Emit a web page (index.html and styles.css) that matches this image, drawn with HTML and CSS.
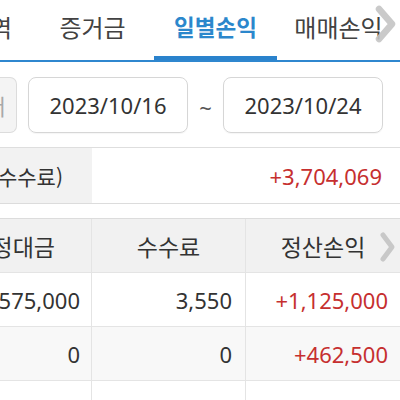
FILE: index.html
```html
<!DOCTYPE html>
<html lang="ko">
<head>
<meta charset="utf-8">
<link rel="stylesheet" href="styles.css">
</head>
<body>
<div class="page">
  <div class="tabs">
    <div class="tab tab-first"><span>거래내역</span></div>
    <div class="tab"><span>증거금</span></div>
    <div class="tab active"><span>일별손익</span></div>
    <div class="tab"><span>매매손익</span></div>
    <svg class="tab-arrow" width="22" height="38" viewBox="0 0 22 38"><path d="M4 4 L17 19 L4 34" fill="none" stroke="#c4c4c4" stroke-width="6.5" stroke-linecap="round" stroke-linejoin="round" opacity="0.9"/></svg>
  </div>

  <div class="dates">
    <div class="pbtn"><span>기간서</span></div>
    <div class="datebox">2023/10/16</div>
    <div class="tilde">~</div>
    <div class="datebox">2023/10/24</div>
  </div>

  <div class="summary">
    <div class="sum-label"><span>정산손익(수수료)</span></div>
    <div class="sum-value red">+3,704,069</div>
  </div>

  <div class="table">
    <div class="row head">
      <div class="cell c1"><span>약정대금</span></div>
      <div class="cell c2 center">수수료</div>
      <div class="cell c3 center">정산손익</div>
      <svg class="head-arrow" width="18" height="32" viewBox="0 0 18 32"><path d="M4 4 L13 16 L4 28" fill="none" stroke="#c8c8c8" stroke-width="5" stroke-linecap="round" stroke-linejoin="round"/></svg>
    </div>
    <div class="row">
      <div class="cell c1"><span>3,575,000</span></div>
      <div class="cell c2">3,550</div>
      <div class="cell c3 red">+1,125,000</div>
    </div>
    <div class="row alt">
      <div class="cell c1"><span>0</span></div>
      <div class="cell c2">0</div>
      <div class="cell c3 red">+462,500</div>
    </div>
    <div class="row">
      <div class="cell c1"><span>4,400,000</span></div>
      <div class="cell c2">4,400</div>
      <div class="cell c3 blue">-112,500</div>
    </div>
  </div>
</div>
</body>
</html>
```

FILE: styles.css
```css
html, body {
  margin: 0;
  padding: 0;
  background: #ffffff;
}
body {
  width: 400px;
  height: 400px;
  overflow: hidden;
  font-family: "Noto Sans", "Noto Sans CJK KR", sans-serif;
  color: #333333;
}
.page {
  width: 400px;
}

/* tabs */
.tabs {
  position: relative;
  display: flex;
  height: 60px;
  border-bottom: 2px solid #2f87cf;
}
.tab {
  width: 123px;
  flex: none;
  display: flex;
  align-items: center;
  justify-content: center;
  padding-bottom: 8px;
  box-sizing: border-box;
  font-family: "Noto Sans CJK KR", sans-serif;
  font-size: 24px;
  color: #424242;
  white-space: nowrap;
  overflow: hidden;
}
.tab-first {
  width: 31px;
  justify-content: flex-end;
  padding-right: 19px;
}
.tab.active {
  color: #2b87cc;
  font-size: 22.5px;
  font-weight: 700;
  box-shadow: inset 0 -4px 0 #2a82cc;
}
.tab-arrow {
  position: absolute;
  right: 3px;
  top: 5px;
}

/* dates */
.dates {
  display: flex;
  align-items: center;
  height: 85px;
  border-bottom: 1px solid #dedede;
}
.pbtn {
  width: 17px;
  height: 56px;
  box-sizing: border-box;
  background: #f4f4f4;
  border: 1px solid #dcdcdc;
  border-left: none;
  border-radius: 0 7px 7px 0;
  display: flex;
  align-items: center;
  justify-content: flex-end;
  overflow: hidden;
  white-space: nowrap;
  font-family: "Noto Sans CJK KR", sans-serif;
  font-size: 22px;
  color: #a9a9a9;
  padding-right: 10px;
  margin-right: 11px;
}
.datebox {
  width: 160px;
  height: 56px;
  box-sizing: border-box;
  border: 1px solid #d6d6d6;
  border-radius: 8px;
  display: flex;
  align-items: center;
  justify-content: center;
  font-size: 22px;
  color: #333333;
  box-shadow: 0 1px 1px rgba(0,0,0,0.04);
}
.tilde {
  width: 35px;
  text-align: center;
  font-size: 22px;
  color: #555;
  padding-top: 4px;
}

/* summary */
.summary {
  display: flex;
  height: 55px;
  border-bottom: 1px solid #dcdcdc;
  margin-bottom: 14px;
}
.sum-label {
  width: 92px;
  background: #f2f2f2;
  display: flex;
  align-items: center;
  justify-content: flex-end;
  padding-right: 29px;
  box-sizing: border-box;
  overflow: hidden;
  white-space: nowrap;
  font-family: "Noto Sans CJK KR", sans-serif;
  font-size: 21px;
  color: #333333;
}
.sum-value {
  flex: 1;
  display: flex;
  align-items: center;
  justify-content: flex-end;
  padding-right: 18px;
  font-size: 22px;
}

/* table */
.table {
  border-top: 1px solid #dcdcdc;
}
.row {
  position: relative;
  display: grid;
  grid-template-columns: 92px 154px 154px;
  height: 54px;
  border-bottom: 1px solid #e4e4e4;
  box-sizing: border-box;
}
.row.head {
  background: #f1f1f1;
  height: 54px;
}
.row.alt {
  background: #f8f8f8;
}
.cell {
  display: flex;
  align-items: center;
  justify-content: flex-end;
  box-sizing: border-box;
  border-right: 1px solid #e4e4e4;
  white-space: nowrap;
  overflow: hidden;
  font-size: 22px;
  color: #333333;
}
.cell.c3 {
  border-right: none;
  padding-right: 12px;
}
.cell.c2 {
  padding-right: 13px;
}
.cell.c1 {
  padding-right: 11px;
}
.head .cell {
  font-family: "Noto Sans CJK KR", sans-serif;
  font-size: 23px;
  color: #333333;
}
.head .cell.c1 {
  padding-right: 36px;
}
.cell.center {
  justify-content: center;
  padding-right: 0;
}
.head-arrow {
  position: absolute;
  right: 3px;
  top: 12px;
}
.red {
  color: #c62f2f;
}
.blue {
  color: #2e7fcf;
}
```
